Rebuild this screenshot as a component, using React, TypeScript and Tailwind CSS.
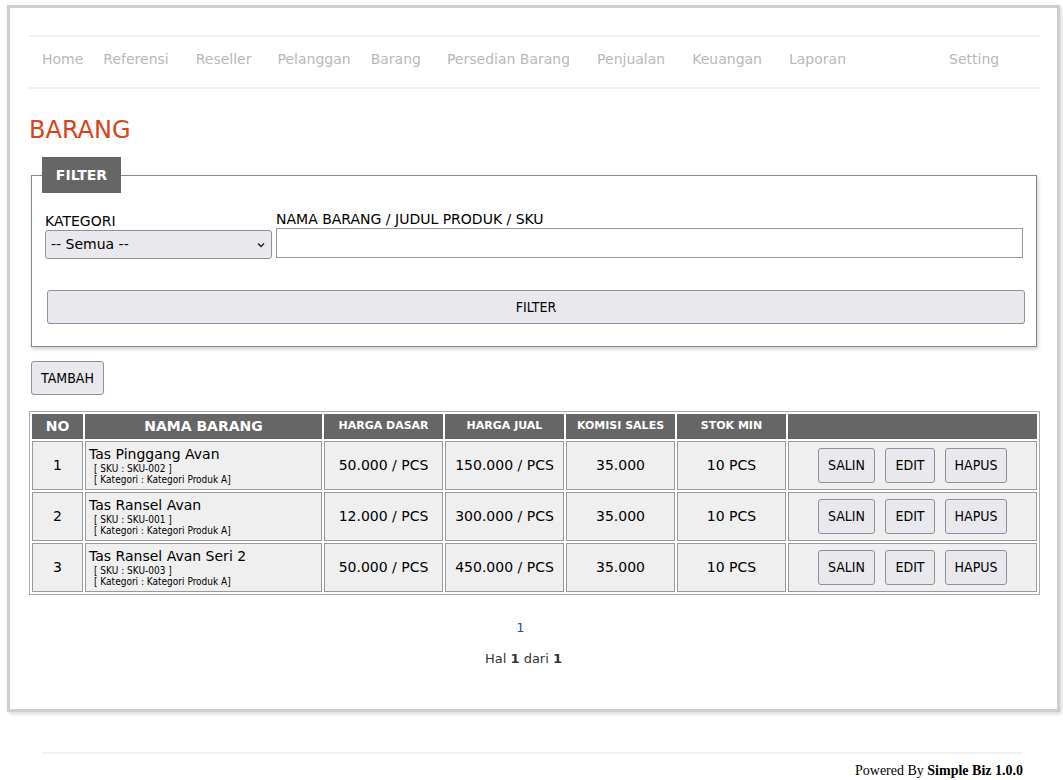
import React from "react";

const navItems = [
  { label: "Home", cls: "ml-[13px]" },
  { label: "Referensi", cls: "ml-[20px]" },
  { label: "Reseller", cls: "ml-[27px]" },
  { label: "Pelanggan", cls: "ml-[26px]" },
  { label: "Barang", cls: "ml-[20px]" },
  { label: "Persedian Barang", cls: "ml-[26px]" },
  { label: "Penjualan", cls: "ml-[27px]" },
  { label: "Keuangan", cls: "ml-[27px]" },
  { label: "Laporan", cls: "ml-[27px]" },
  { label: "Setting", cls: "ml-[103px]" },
];

const rows = [
  { no: 1, name: "Tas Pinggang Avan", sku: "SKU-002", dasar: "50.000", jual: "150.000" },
  { no: 2, name: "Tas Ransel Avan", sku: "SKU-001", dasar: "12.000", jual: "300.000" },
  { no: 3, name: "Tas Ransel Avan Seri 2", sku: "SKU-003", dasar: "50.000", jual: "450.000" },
];

const btn =
  "bg-[#e9e9ed] border border-[#8f8f9d] rounded-[3px] text-[14px] text-black font-['DejaVu_Sans_Condensed','DejaVu_Sans',sans-serif]";

const App = () => {
  return (
    <div className="min-h-[780px] bg-white font-['DejaVu_Sans',sans-serif] text-[14px] text-[#222]">
      <div className="pt-[5px] pl-[7px]">
        <div className="w-[1053px] h-[707px] border-[3px] border-[#cfcfcf] shadow-[2px_2px_4px_rgba(0,0,0,0.15)] px-[19px] pt-[27px]">
          {/* menu */}
          <div className="w-[1011px] border-t-2 border-b-2 border-[#f0f0f0] h-[54px] flex items-center pb-[5px] text-[#b8b8b8] text-[14px]">
            {navItems.map((n) => (
              <span key={n.label} className={n.cls}>
                {n.label}
              </span>
            ))}
          </div>

          <h1 className="text-[24px] text-[#d9431a] mt-[26px] leading-[30px]">BARANG</h1>

          {/* filter */}
          <div className="relative mt-[30px] ml-[2px] w-[1006px] h-[172px] border border-[#8a8a8a] shadow-[1px_2px_4px_rgba(0,0,0,0.2)]">
            <div className="absolute left-[10px] top-[-19px] w-[79px] h-[36px] bg-[#666] text-white font-bold text-[14px] flex items-center justify-center">
              FILTER
            </div>
            <div className="flex pt-[34px] pl-[13px]">
              <div className="flex flex-col">
                <span className="text-[14px] text-black leading-[18px] mt-[2px]">KATEGORI</span>
                <div className="w-[227px] h-[29px] bg-[#e9e9ed] border border-[#8f8f9d] rounded-[3px] flex items-center justify-between px-[5px] text-[14px] text-black">
                  <span>-- Semua --</span>
                  <svg width="10" height="10" viewBox="0 0 10 10">
                    <path d="M2 3.5 L5 6.5 L8 3.5" stroke="#222" strokeWidth="1.4" fill="none" />
                  </svg>
                </div>
              </div>
              <div className="flex flex-col ml-[4px]">
                <span className="text-[14px] text-black leading-[18px]">NAMA BARANG / JUDUL PRODUK / SKU</span>
                <div className="w-[747px] h-[30px] border border-[#999] bg-white" />
              </div>
            </div>
            <button className={`${btn} mt-[31px] ml-[15px] w-[978px] h-[34px]`}>FILTER</button>
          </div>

          <button className={`${btn} mt-[14px] ml-[2px] w-[73px] h-[34px]`}>TAMBAH</button>

          {/* table */}
          <table className="mt-[16px] w-[1011px] border border-[#aaa] border-separate border-spacing-[2px] text-black">
            <thead>
              <tr className="h-[25px] bg-[#666] text-white font-bold">
                <th className="w-[51px] text-[14px]">NO</th>
                <th className="w-[237px] text-[14px]">NAMA BARANG</th>
                <th className="w-[119px] text-[11px]">HARGA DASAR</th>
                <th className="w-[119px] text-[11px]">HARGA JUAL</th>
                <th className="w-[109px] text-[11px]">KOMISI SALES</th>
                <th className="w-[109px] text-[11px]">STOK MIN</th>
                <th></th>
              </tr>
            </thead>
            <tbody>
              {rows.map((r) => (
                <tr key={r.no} className="h-[49px]">
                  <td className="bg-[#efefef] border border-[#999] text-center">{r.no}</td>
                  <td className="bg-[#efefef] border border-[#999] pl-[3px] align-middle">
                    <div className="leading-[17px] text-[14px]">{r.name}</div>
                    <div className="font-['DejaVu_Sans_Condensed','DejaVu_Sans',sans-serif] text-[10px] leading-[11px] pl-[5px]">
                      [ SKU : {r.sku} ]
                    </div>
                    <div className="font-['DejaVu_Sans_Condensed','DejaVu_Sans',sans-serif] text-[10px] leading-[11px] pl-[5px]">
                      [ Kategori : Kategori Produk A]
                    </div>
                  </td>
                  <td className="bg-[#efefef] border border-[#999] text-center">{r.dasar} / PCS</td>
                  <td className="bg-[#efefef] border border-[#999] text-center">{r.jual} / PCS</td>
                  <td className="bg-[#efefef] border border-[#999] text-center">35.000</td>
                  <td className="bg-[#efefef] border border-[#999] text-center">10 PCS</td>
                  <td className="bg-[#efefef] border border-[#999]">
                    <div className="flex justify-center gap-[10px]">
                      <button className={`${btn} w-[57px] h-[35px]`}>SALIN</button>
                      <button className={`${btn} w-[50px] h-[35px]`}>EDIT</button>
                      <button className={`${btn} w-[62px] h-[35px]`}>HAPUS</button>
                    </div>
                  </td>
                </tr>
              ))}
            </tbody>
          </table>

          <div className="mt-[23px] text-center text-[13px] text-[#2a4fb0] pr-[26px]">1</div>
          <div className="mt-[11px] text-center text-[13px] text-[#333] pr-[20px]">
            Hal <b>1</b> dari <b>1</b>
          </div>
        </div>
      </div>

      {/* footer */}
      <div className="mt-[40px] ml-[43px] w-[980px] border-t-2 border-[#f0f0f0] pt-[6px] text-right font-['Liberation_Serif',serif] text-[14px] text-black">
        Powered By <b>Simple Biz 1.0.0</b>
      </div>
    </div>
  );
};

export default App;
